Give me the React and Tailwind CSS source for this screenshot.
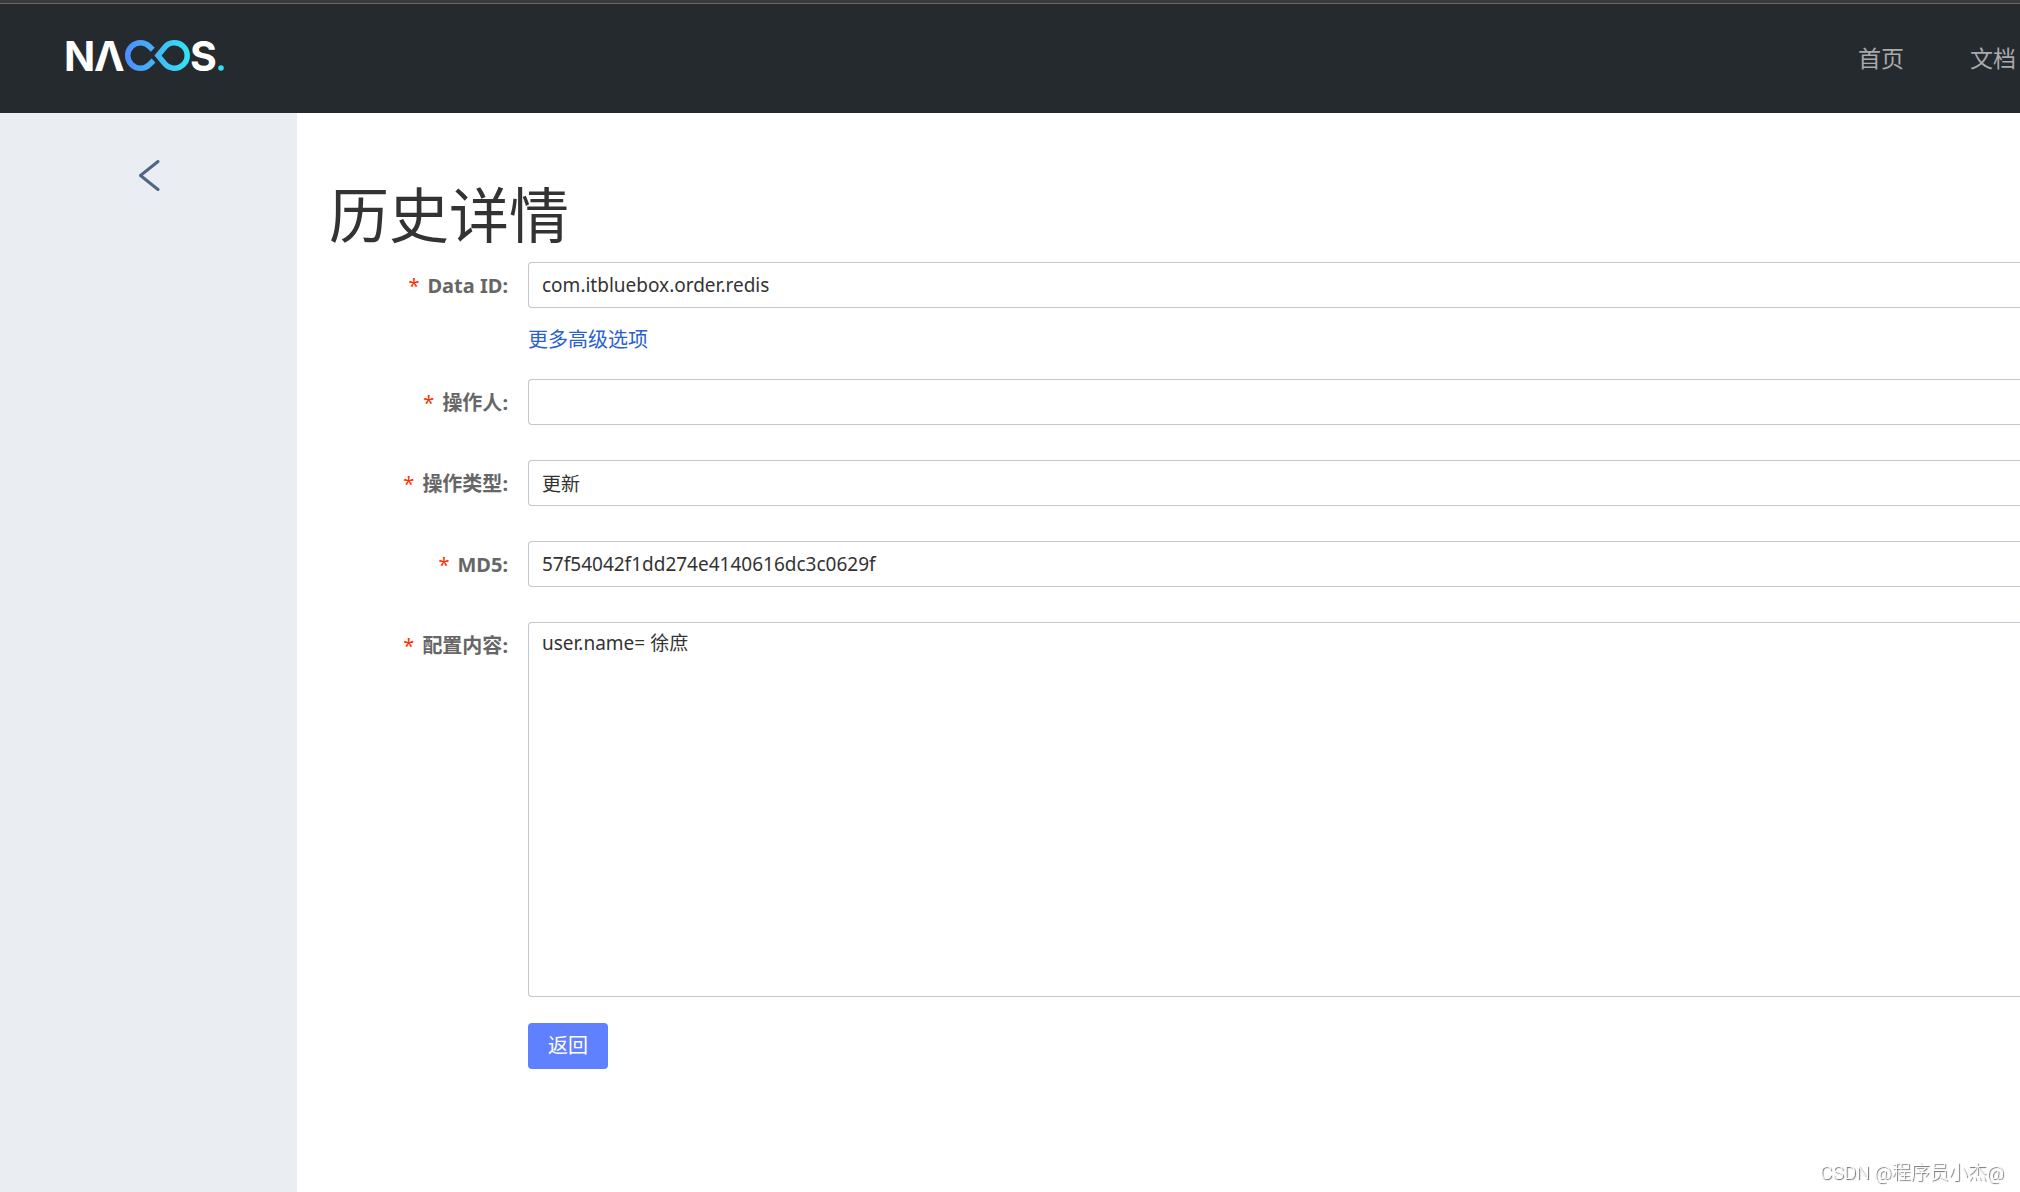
import { useState } from 'react';

const NAV_LINKS = ['首页', '文档'];

const fieldClass =
  'block w-full rounded-l border border-r-0 border-[#c4c6cf] bg-white px-[13px] text-[19px] text-[#333] outline-none focus:border-[#5e7fff]';

function Logo() {
  return (
    <svg width="172" height="56" viewBox="-6 -12 172 56" role="img" aria-label="Nacos">
      <defs>
        <linearGradient id="loop" gradientUnits="userSpaceOnUse" x1="59" y1="0" x2="125" y2="0">
          <stop offset="0" stopColor="#4f8cfc" />
          <stop offset="1" stopColor="#33e6f2" />
        </linearGradient>
      </defs>
      <g fill="#fff" fontFamily="Inter, sans-serif" fontWeight="700" fontSize="41">
        <text x="-2" y="31">N</text>
        <text x="28" y="31">Λ</text>
        <text x="124" y="31">S</text>
      </g>
      <g fill="none" stroke="url(#loop)" strokeWidth="5.5">
        <path d="M86.8 9.8 L83.5 6.5 A12.75 12.75 0 1 0 83.5 24.5 L87.5 20.5" />
        <path d="M92 15.5 L98.6 7.4 A12.75 12.75 0 1 1 98.6 23.6 Z" />
      </g>
      <circle cx="155" cy="28" r="2.8" fill="#33e0ee" />
    </svg>
  );
}

function FormItem({ id, label, children }) {
  return (
    <div className="flex">
      <label
        htmlFor={id}
        className="w-[198px] shrink-0 pr-5 text-right text-[20px] leading-[48px] font-bold text-[#666]"
      >
        <span className="mr-2 font-normal text-[#ff3000]">*</span>
        {label}:
      </label>
      <div className="min-w-0 flex-1">{children}</div>
    </div>
  );
}

export default function App() {
  const [showMore, setShowMore] = useState(false);

  return (
    <div className="flex min-h-screen flex-col bg-white font-['Noto_Sans','Noto_Sans_CJK_SC',sans-serif] text-[#333]">
      <div className="h-1 border-b border-[#63676a] bg-[#3a3a3a]" />
      <header className="flex h-[109px] items-center justify-between bg-[#252a2f] pr-1 pl-[60px]">
        <a href="#home" className="pb-1.5">
          <Logo />
        </a>
        <nav className="flex gap-[66px]">
          {NAV_LINKS.map((item) => (
            <a key={item} href="#nav" className="text-[23px] text-[#a8aaac]">
              {item}
            </a>
          ))}
        </nav>
      </header>

      <div className="flex flex-1">
        <aside className="w-[297px] shrink-0 bg-[#eaedf1] pt-[46px]">
          <button type="button" aria-label="返回" className="mx-auto block">
            <svg width="22" height="33" viewBox="0 0 22 33" fill="none" stroke="#4f6684" strokeWidth="3" strokeLinecap="round" strokeLinejoin="round">
              <path d="M20 2.5 L2.5 16.5 L20 30.5" />
            </svg>
          </button>
        </aside>

        <main className="min-w-0 flex-1 pt-[57px] pl-[33px]">
          <h1 className="-ml-px pb-[2px] text-[60px] leading-[90px]">历史详情</h1>

          <form onSubmit={(e) => e.preventDefault()}>
            <FormItem id="dataId" label="Data ID">
              <input id="dataId" readOnly value="com.itbluebox.order.redis" className={`${fieldClass} h-[46px]`} />
            </FormItem>
            <div className="flex h-[69px] items-center pb-2.5 pl-[198px]">
              <a href="#more" onClick={() => setShowMore(!showMore)} className="text-[20px] text-[#2a5fd0]">
                更多高级选项
              </a>
            </div>

            <div className="flex flex-col gap-[33px]">
              <FormItem id="operator" label="操作人">
                <input id="operator" readOnly value="" className={`${fieldClass} h-[46px]`} />
              </FormItem>
              <FormItem id="opType" label="操作类型">
                <input id="opType" readOnly value="更新" className={`${fieldClass} h-[46px]`} />
              </FormItem>
              <FormItem id="md5" label="MD5">
                <input id="md5" readOnly value="57f54042f1dd274e4140616dc3c0629f" className={`${fieldClass} h-[46px]`} />
              </FormItem>
              <FormItem id="content" label="配置内容">
                <textarea
                  id="content"
                  readOnly
                  value="user.name= 徐庶"
                  className={`${fieldClass} h-[375px] resize-none py-1.5`}
                />
              </FormItem>
            </div>

            <div className="pt-[26px] pl-[198px]">
              <button type="button" className="h-[46px] rounded bg-[#5f80ff] px-5 text-[20px] text-white">
                返回
              </button>
            </div>
          </form>
        </main>
      </div>

      <div className="fixed right-4 bottom-[5px] font-['Roboto','Noto_Sans_CJK_SC',sans-serif] text-[19px] font-light text-white [text-shadow:1px_1px_1px_#666]">
        CSDN @程序员小杰@
      </div>
    </div>
  );
}
